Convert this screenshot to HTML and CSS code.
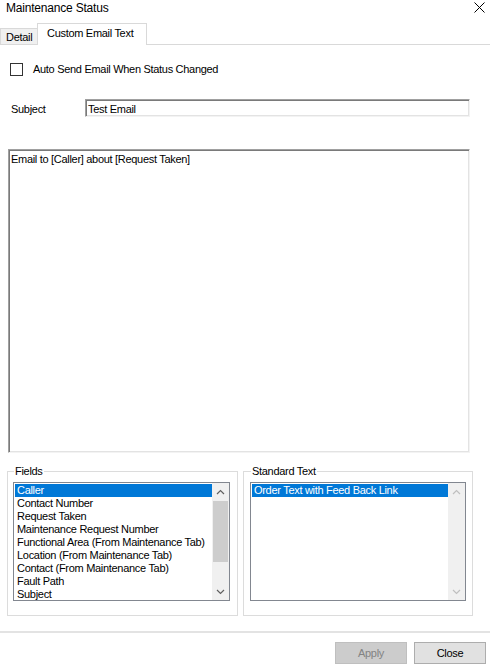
FILE: index.html
```html
<!DOCTYPE html>
<html>
<head>
<meta charset="utf-8">
<link rel="stylesheet" href="styles.css">
</head>
<body>
<div class="window">
  <div class="titlebar">
    <span class="title">Maintenance Status</span>
    <svg class="close-x" width="11" height="11" viewBox="0 0 11 11"><path d="M0.5 0.5 L10.5 10.5 M10.5 0.5 L0.5 10.5" stroke="#000" stroke-width="1" fill="none"/></svg>
  </div>
  <div class="tabs">
    <div class="tab">Detail</div>
    <div class="tab tab-active">Custom Email Text</div>
  </div>
  <div class="panel">
    <div class="check-row">
      <span class="checkbox"></span>
      <span class="check-label">Auto Send Email When Status Changed</span>
    </div>
    <div class="subject-row">
      <span class="subject-label">Subject</span>
      <div class="textbox">Test Email</div>
    </div>
    <div class="textarea">Email to [Caller] about [Request Taken]</div>
    <div class="groups">
      <fieldset class="group group-fields">
        <legend>Fields</legend>
        <div class="listbox">
          <div class="items">
            <div class="item selected">Caller</div>
            <div class="item">Contact Number</div>
            <div class="item">Request Taken</div>
            <div class="item">Maintenance Request Number</div>
            <div class="item">Functional Area (From Maintenance Tab)</div>
            <div class="item">Location (From Maintenance Tab)</div>
            <div class="item">Contact (From Maintenance Tab)</div>
            <div class="item">Fault Path</div>
            <div class="item">Subject</div>
          </div>
          <div class="scrollbar">
            <div class="sb-btn"><svg width="9" height="6" viewBox="0 0 9 6"><path d="M1 5 L4.5 1.5 L8 5" stroke="#606060" stroke-width="1.2" fill="none"/></svg></div>
            <div class="sb-track"><div class="sb-thumb"></div></div>
            <div class="sb-btn"><svg width="9" height="6" viewBox="0 0 9 6"><path d="M1 1 L4.5 4.5 L8 1" stroke="#606060" stroke-width="1.2" fill="none"/></svg></div>
          </div>
        </div>
      </fieldset>
      <fieldset class="group group-std">
        <legend>Standard Text</legend>
        <div class="listbox">
          <div class="items">
            <div class="item selected">Order Text with Feed Back Link</div>
          </div>
          <div class="scrollbar disabled">
            <div class="sb-btn"><svg width="9" height="6" viewBox="0 0 9 6"><path d="M1 5 L4.5 1.5 L8 5" stroke="#bfbfbf" stroke-width="1.2" fill="none"/></svg></div>
            <div class="sb-track"></div>
            <div class="sb-btn"><svg width="9" height="6" viewBox="0 0 9 6"><path d="M1 1 L4.5 4.5 L8 1" stroke="#bfbfbf" stroke-width="1.2" fill="none"/></svg></div>
          </div>
        </div>
      </fieldset>
    </div>
  </div>
  <div class="separator"></div>
  <div class="buttons">
    <div class="btn btn-disabled">Apply</div>
    <div class="btn">Close</div>
  </div>
</div>
</body>
</html>
```
FILE: styles.css
```css
* { box-sizing: border-box; }
html, body { margin: 0; padding: 0; background: #fff; }
body {
  font-family: "Liberation Sans", Arial, sans-serif;
  font-size: 11px;
  letter-spacing: -0.3px;
  color: #000;
}
.window {
  width: 490px;
  height: 669px;
  display: flex;
  flex-direction: column;
  overflow: hidden;
}
.titlebar {
  height: 22px;
  display: flex;
  justify-content: space-between;
  align-items: flex-start;
  padding: 1px 5px 0 6px;
}
.title { font-size: 12px; line-height: 14px; letter-spacing: -0.2px; }
.close-x { margin-top: 1px; }
.tabs {
  height: 23px;
  display: flex;
  align-items: flex-end;
  border-bottom: 1px solid #d9d9d9;
}
.tab {
  height: 16px;
  width: 38px;
  border: 1px solid #d9d9d9;
  border-bottom: none;
  background: #f0f0f0;
  padding: 2px 0 0 5px;
  line-height: 13px;
  margin-bottom: 0;
}
.tab-active {
  height: 22px;
  width: 110px;
  margin-left: -1px;
  margin-bottom: -1px;
  background: #fff;
  padding: 3px 0 0 9px;
}
.panel { display: flex; flex-direction: column; }
.check-row {
  display: flex;
  align-items: center;
  margin-top: 18px;
  padding-left: 10px;
  height: 13px;
}
.checkbox {
  width: 13px;
  height: 13px;
  border: 1px solid #333;
  background: #fff;
}
.check-label { margin-left: 10px; line-height: 13px; }
.subject-row {
  display: flex;
  align-items: center;
  margin-top: 23px;
  height: 18px;
}
.subject-label { width: 85px; padding-left: 11px; padding-top: 2px; }
.textbox {
  width: 385px;
  height: 18px;
  border: 1px solid;
  border-color: #a0a0a0 #f3f3f3 #f3f3f3 #a0a0a0;
  box-shadow: inset 1px 1px #7a7a7a, inset -1px -1px #e3e3e3;
  padding: 3px 0 0 2px;
  line-height: 13px;
}
.textarea {
  margin-top: 32px;
  margin-left: 8px;
  width: 462px;
  height: 304px;
  border: 1px solid;
  border-color: #a0a0a0 #f3f3f3 #f3f3f3 #a0a0a0;
  box-shadow: inset 1px 1px #7a7a7a, inset -1px -1px #e3e3e3;
  padding: 3px 0 0 2px;
  line-height: 13px;
}
.groups {
  display: flex;
  margin-top: 12px;
  padding-left: 7px;
  gap: 5px;
}
.group {
  margin: 0;
  border: 1px solid #dcdcdc;
  height: 151px;
  padding: 4px 0 0 5px;
  min-width: 0;
}
.group legend {
  padding: 0 1px;
  margin-left: 1px;
  line-height: 13px;
  height: 13px;
}
.group-fields { width: 231px; }
.group-std { width: 230px; padding-left: 6px; }
.group-std .listbox { width: 216px; }
.listbox {
  width: 217px;
  height: 119px;
  border: 1px solid #828790;
  display: flex;
  background: #fff;
}
.items {
  flex: 1;
  padding: 1px 0 0 1px;
  min-width: 0;
}
.item {
  height: 13px;
  line-height: 13px;
  padding-left: 2px;
  white-space: nowrap;
  overflow: hidden;
}
.item.selected { background: #0078d7; color: #fff; }
.scrollbar {
  width: 17px;
  display: flex;
  flex-direction: column;
  background: #f0f0f0;
}
.sb-btn {
  height: 17px;
  display: flex;
  align-items: center;
  justify-content: center;
}
.sb-track { flex: 1; padding: 1px 1px; }
.sb-thumb { height: 61px; background: #cdcdcd; }
.separator {
  margin-top: 15px;
  height: 2px;
  background: #e3e3e3;
}
.buttons {
  display: flex;
  justify-content: flex-end;
  gap: 7px;
  margin-top: 9px;
  padding-right: 4px;
}
.btn {
  width: 72px;
  height: 22px;
  border: 1px solid #adadad;
  background: #e1e1e1;
  display: flex;
  align-items: center;
  justify-content: center;
}
.btn-disabled {
  background: #cccccc;
  border-color: #bfbfbf;
  color: #838383;
}
```
